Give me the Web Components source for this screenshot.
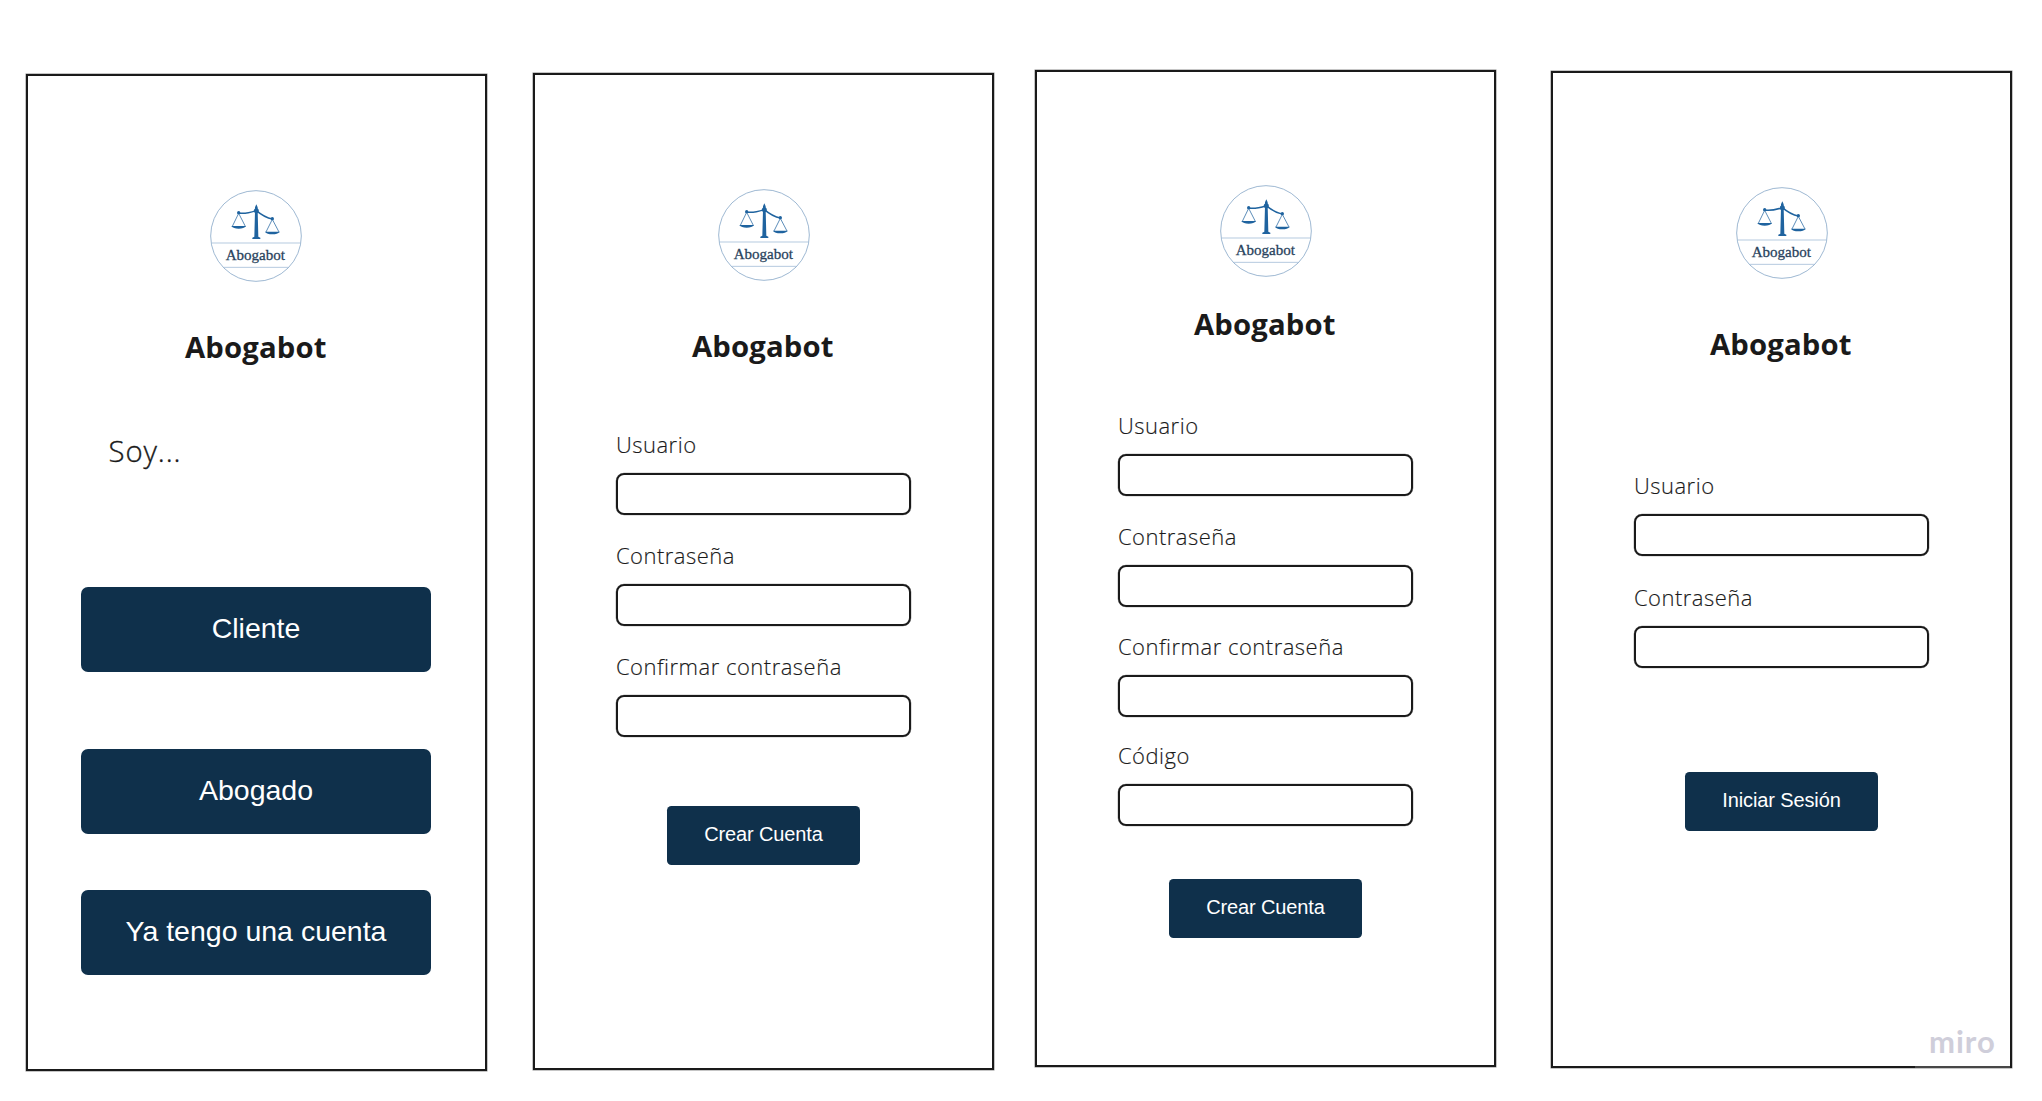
<!DOCTYPE html>
<html lang="es">
<head>
<meta charset="utf-8">
<title>Abogabot</title>
<style>
  body { margin: 0; background: #fff; }
</style>
</head>
<body>
<wire-board>
  <phone-frame style="margin:74px 0 0 26px">
    <brand-logo style="margin-right:1px"></brand-logo>
    <brand-title>Abogabot</brand-title>
    <lead-text>Soy...</lead-text>
    <action-button size="large" style="margin-top:115.4px">Cliente</action-button>
    <action-button size="large" style="margin-top:76.6px">Abogado</action-button>
    <action-button size="large" style="margin-top:55.3px">Ya tengo una cuenta</action-button>
  </phone-frame>
  <phone-frame style="margin:73px 0 0 46px">
    <brand-logo></brand-logo>
    <brand-title>Abogabot</brand-title>
    <form-field style="margin-top:63px">Usuario</form-field>
    <form-field style="margin-top:25px">Contraseña</form-field>
    <form-field style="margin-top:24.3px">Confirmar contraseña</form-field>
    <action-button style="margin-top:69px">Crear Cuenta</action-button>
  </phone-frame>
  <phone-frame style="margin:70px 0 0 41px">
    <brand-logo style="margin-top:112.3px"></brand-logo>
    <brand-title style="margin-top:25.7px">Abogabot</brand-title>
    <form-field style="margin-top:66.4px">Usuario</form-field>
    <form-field style="margin-top:25px">Contraseña</form-field>
    <form-field style="margin-top:24px">Confirmar contraseña</form-field>
    <form-field style="margin-top:22.6px">Código</form-field>
    <action-button style="margin-top:53.3px">Crear Cuenta</action-button>
  </phone-frame>
  <phone-frame style="margin:71px 0 0 55px">
    <brand-logo></brand-logo>
    <brand-title>Abogabot</brand-title>
    <form-field style="margin-top:106px">Usuario</form-field>
    <form-field style="margin-top:25.7px">Contraseña</form-field>
    <action-button style="margin-top:103.6px">Iniciar Sesión</action-button>
    <board-watermark slot="overlay">miro</board-watermark>
  </phone-frame>
</wire-board>
<script>
const define = (name, html) => customElements.define(name, class extends HTMLElement {
  constructor() {
    super();
    this.attachShadow({ mode: 'open' }).innerHTML = html;
  }
});

define('wire-board', `
  <style>
    :host { display: flex; align-items: flex-start; width: 2042px; height: 1101px; overflow: hidden;
      color: #1a1a1a; font-family: "Open Sans", sans-serif; }
  </style><slot></slot>`);

define('phone-frame', `
  <style>
    :host { display: flex; flex-direction: column; align-items: center; position: relative; flex: none;
      box-sizing: border-box; width: 461px; height: 997px; border: 2px solid #1a1a1a;
      box-shadow: 0 0 0 .5px rgba(26,26,26,.5); }
  </style><slot></slot><slot name="overlay"></slot>`);

define('brand-logo', `
  <style>
    :host { display: block; width: 94px; height: 94px; margin-top: 113.3px; flex: none; }
    svg { display: block; }
    text { font-family: "Liberation Serif", serif; }
  </style>
  <svg width="94" height="94" viewBox="57 58 282 282" fill="none">
    <g stroke="#8eadcb" stroke-width="2.6">
      <circle cx="198" cy="199" r="136"/>
      <path d="M64 220H332M101 293H295" stroke="#a9c1da"/>
    </g>
    <g stroke="#1f639f" stroke-linejoin="round" stroke-linecap="round">
      <path d="M146 130Q164 134 199 123Q224 144 247 148" stroke-width="4.5"/>
      <path d="M146 131L127 170M146 131L166 170M247 149L228 187M247 149L267 187" stroke-width="2.2"/>
    </g>
    <g fill="#1f639f">
      <circle cx="146" cy="129" r="5"/><circle cx="247" cy="147" r="5"/><circle cx="199" cy="123" r="7.5"/>
      <path d="M199 104L203 113V124L205 201L211 204V208H187V204L193 201L195 124V113Z"/>
      <path d="M124 169H168Q162 177 146 177Q130 177 124 169ZM225 186H269Q263 194 247 194Q231 194 225 186Z"/>
    </g>
    <text x="107" y="272" font-size="43" textLength="178" lengthAdjust="spacingAndGlyphs" fill="#29435d" stroke="#29435d" stroke-width=".8">Abogabot</text>
  </svg>`);

define('brand-title', `
  <style>
    :host { display: block; margin-top: 44px; padding-right: 1.5px; flex: none;
      font: 700 29.3px/40px "Open Sans", sans-serif; letter-spacing: .13px; white-space: nowrap; }
  </style><slot></slot>`);

define('lead-text', `
  <style>
    :host { display: block; align-self: flex-start; margin: 64px 0 0 80.5px; flex: none;
      font: 300 29.3px/40px "Open Sans", sans-serif; letter-spacing: .9px; white-space: nowrap;
      -webkit-text-stroke: .35px #1a1a1a; }
  </style><slot></slot>`);

define('form-field', `
  <style>
    :host { display: flex; flex-direction: column; gap: 14px; width: 296px; flex: none; }
    label { display: block; padding-left: .4px; font: 300 22px/30px "Open Sans", sans-serif; letter-spacing: .5px;
      white-space: nowrap; -webkit-text-stroke: .15px #1a1a1a; }
    .box { box-sizing: border-box; width: 295.6px; height: 42px; border: 2px solid #1a1a1a; border-radius: 8px;
      box-shadow: 0 0 0 .3px rgba(26,26,26,.5); }
  </style><label><slot></slot></label><div class="box"></div>`);

define('action-button', `
  <style>
    :host { display: block; flex: none; width: 193px; }
    button { display: flex; align-items: center; justify-content: center; width: 100%; height: 59px;
      margin: 0; padding: 0 0 3px; border: 0; border-radius: 4.5px; background: #0f304b; color: #fff;
      font: 20px/24px "Liberation Sans", Arial, sans-serif; letter-spacing: -.12px; white-space: nowrap; }
    :host([size="large"]) { width: 350px; margin-right: 1px; }
    :host([size="large"]) button { height: 85.5px; border-radius: 7px; font-size: 28.5px; line-height: 34px; letter-spacing: 0; }
  </style><button><slot></slot></button>`);

define('board-watermark', `
  <style>
    :host { position: absolute; right: 0; bottom: -2px; box-sizing: border-box; width: 95px; height: 52px;
      padding: 5px 0 0 14px; background: rgba(255,255,255,.2); color: #cfceda;
      font: 700 31px/40px Lato, sans-serif; letter-spacing: 1px; }
  </style><slot></slot>`);
</script>
</body>
</html>
